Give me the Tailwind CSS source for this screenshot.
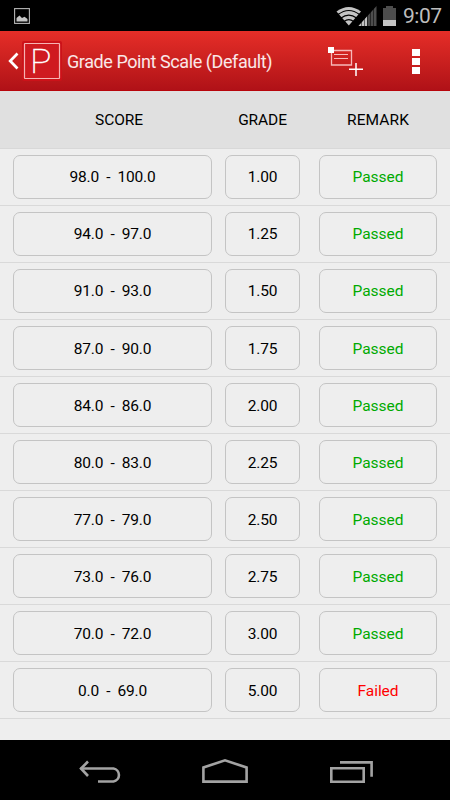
<!DOCTYPE html>
<html lang="en">
<head>
    <meta charset="UTF-8">
    <meta name="viewport" content="width=device-width, initial-scale=1.0">
    <title>Grade Point Scale</title>
    <script src="https://cdn.jsdelivr.net/npm/@tailwindcss/browser@4"></script>
</head>
<body class="bg-black">
<div class="w-[450px] h-[800px] flex flex-col overflow-hidden bg-[#eeeeee] font-['Roboto',sans-serif] text-black">

    <!-- Status bar -->
    <div class="h-[31px] shrink-0 bg-black flex items-center pl-[14px] pr-2">
        <svg class="w-4 h-4" viewBox="0 0 16 16" fill="none">
            <rect x=".6" y=".6" width="14.8" height="14.8" stroke="#b5b5b5" stroke-width="1.1"/>
            <path d="M2.500 13.500V10L5.500 7.500 8 10l2.500-1.200 3 2.200v2.500z" fill="#c4c4c4"/>
        </svg>
        <svg class="ml-auto w-[62px] h-[22px]" viewBox="336 4 62 22">
            <path d="M336.500 10.500Q348.800 1.300 361 10.500L348.800 24.500z" fill="#c4c4c4"/>
            <path d="M338 13.600Q348.800 5.400 359.600 13.600M341 17.100Q348.800 11.200 356.600 17.100M344 20.400Q348.800 17 353.600 20.400" stroke="#000" stroke-width="1.200" fill="none"/>
            <path d="M376.500 5V25H358.500z" fill="#4d4d4d"/>
            <path d="M367 15.600V25H358.500z" fill="#c4c4c4"/>
            <path d="M361.500 18v8M364.500 14v12M367.500 10v16M370.500 8v18M373.500 5v21" stroke="#000" stroke-width=".5"/>
            <path d="M383 7h3V5h7v2h3v12h-13z" fill="#4d4d4d"/>
            <path d="M383 19h13v6h-13z" fill="#c4c4c4"/>
        </svg>
        <span class="ml-[5px] mt-0.5 w-[39px] text-[21px] leading-none tracking-[-0.5px] text-[#bdbdbd] whitespace-nowrap">9:07</span>
    </div>

    <!-- Action bar -->
    <div class="h-[60px] shrink-0 bg-linear-to-b from-[#e62e28] to-[#b01117] border-b border-[#b8060c] flex items-center">
        <svg class="ml-2 w-3 h-[18px] mt-px" viewBox="0 0 12 18" fill="none">
            <path d="M9.500 1.500L2.200 9l7.300 7.500" stroke="#fff" stroke-width="2.700"/>
        </svg>
        <svg class="ml-[2px] w-10 h-10 mt-px" viewBox="0 0 40 40">
            <rect x="0" y="0" width="40" height="40" rx="2" fill="#cc1219"/>
            <rect x="2.500" y="2.500" width="35" height="35" rx=".5" fill="#cf1a20" stroke="#f6b3b3" stroke-width="1.200"/>
            <text x="8.300" y="31.500" font-size="33" font-weight="100" textLength="21" lengthAdjust="spacingAndGlyphs" fill="#fff" stroke="#fff" stroke-width=".5" font-family="Roboto, sans-serif">P</text>
        </svg>
        <h1 class="ml-[5px] mt-0.5 text-[18px] tracking-[-0.42px] text-white/90 whitespace-nowrap">Grade Point Scale (Default)</h1>
        <svg class="ml-auto mr-[48px] w-9 h-[30px] mt-0.5" viewBox="328 47 36 30" fill="none">
            <path d="M331.500 50.500h20v14.500h-20z" stroke="#f7b9b9" stroke-width="1.300"/>
            <path d="M334 54.500h14M334 58.500h14" stroke="#f7b9b9" stroke-width="1.200"/>
            <path d="M328 47h6v6h-6z" fill="#fff"/>
            <path d="M349 69.300h14M356 63v13" stroke="#fff" stroke-width="1.500"/>
        </svg>
        <div class="w-2 mr-[30px] mt-0.5 flex flex-col gap-[2px]">
            <i class="block h-[7px] bg-white"></i>
            <i class="block h-[7px] bg-white"></i>
            <i class="block h-[7px] bg-white"></i>
        </div>
    </div>

    <!-- Column titles -->
    <div class="h-[57.500px] shrink-0 bg-[#e0e0e0] border-b border-[#d8d8d8] pl-[13px] pr-[13px] pt-[2px] flex items-center text-center text-[15.500px]">
        <span class="w-[199px] pl-[13px] tracking-[-0.1px]">SCORE</span>
        <span class="w-[75px] ml-[13px] tracking-[-0.1px]">GRADE</span>
        <span class="w-[118px] ml-[19px] tracking-[0.1px]">REMARK</span>
    </div>

    <div id="rows" class="h-0 grow text-[15.500px] tracking-[-0.2px]"></div>

    <!-- Navigation bar -->
    <div class="h-[60px] shrink-0 bg-black flex items-center pl-[78px] pr-[77px] justify-between">
        <svg class="w-[44px] h-6 mt-1" viewBox="78 760 44 24" fill="none" stroke="#a3a3a3" stroke-width="2.600">
            <path d="M80.500 768.500h33a6.600 6.600 0 0 1 0 13H98"/>
            <path d="M88 761.500l-7 7 7 7.500"/>
        </svg>
        <svg class="w-[48px] h-[26px] mt-0.5 mr-px" viewBox="201 758 48 26" fill="none" stroke="#a3a3a3" stroke-width="2.600">
            <path d="M203.400 781.600V767.500L225 760.300l21.600 7.200v14.100z"/>
        </svg>
        <svg class="w-[44px] h-6 mt-1" viewBox="329 760 44 24" fill="none" stroke="#a3a3a3" stroke-width="2.600">
            <path d="M331.300 768.300h32.400v13.400h-32.400z"/>
            <path d="M340 762.400h31.600v14.300"/>
        </svg>
    </div>
</div>

<script>
    const scale = [
        ["98.0", "100.0", "1.00"],
        ["94.0", "97.0", "1.25"],
        ["91.0", "93.0", "1.50"],
        ["87.0", "90.0", "1.75"],
        ["84.0", "86.0", "2.00"],
        ["80.0", "83.0", "2.25"],
        ["77.0", "79.0", "2.50"],
        ["73.0", "76.0", "2.75"],
        ["70.0", "72.0", "3.00"],
        ["0.0", "69.0", "5.00"],
    ];

    document.getElementById("rows").innerHTML = scale.map(([from, to, grade]) => {
        // 5.00 is the only failing grade
        const remark = grade === "5.00"
            ? '<span class="text-[#ff0000]">Failed</span>'
            : '<span class="text-[#00aa00]">Passed</span>';
        return `
        <div class="h-[57.05px] px-[13px] border-b border-[#d9d9d9] flex items-center">
            <div class="w-[199px] h-[44px] pt-[3px] rounded-[7px] border border-[#c4c4c4] flex items-center justify-center whitespace-pre">${from}  -  ${to}</div>
            <div class="w-[75px] h-[44px] pt-[3px] ml-[13px] rounded-[7px] border border-[#c4c4c4] flex items-center justify-center">${grade}</div>
            <div class="w-[118px] h-[44px] pt-[3px] ml-[19px] rounded-[7px] border border-[#c4c4c4] flex items-center justify-center tracking-[-0.05px]">${remark}</div>
        </div>`;
    }).join("");
</script>
</body>
</html>
